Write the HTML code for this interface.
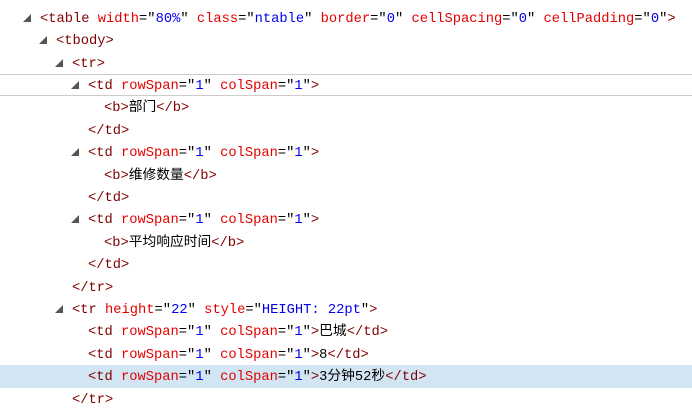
<!DOCTYPE html>
<html><head><meta charset="utf-8"><style>
body{margin:0;width:692px;height:411px;overflow:hidden;background:#fff;font-family:"Liberation Mono","Noto Sans CJK SC",monospace;font-size:13.75px;color:#000}
.r{position:absolute;left:0;width:692px;height:22.4px;line-height:22.4px;white-space:pre}
.r>span:not(.tri){top:2px}
.t{color:#800000}.a{color:#e50000}.v{color:#0000f0}
.tri{position:absolute;top:7px;width:0;height:0;border-left:8px solid transparent;border-bottom:8px solid #555}
.hl{background:#d2e5f3}
.bx{border-top:1px solid #ccc;border-bottom:1px solid #ccc;box-sizing:border-box}
</style></head><body>
<div class="r" style="top:6.8px"><span class="tri" style="left:23px"></span><span style="position:absolute;left:40px"><span class="t">&lt;table</span> <span class="a">width</span>="<span class="v">80%</span>" <span class="a">class</span>="<span class="v">ntable</span>" <span class="a">border</span>="<span class="v">0</span>" <span class="a">cellSpacing</span>="<span class="v">0</span>" <span class="a">cellPadding</span>="<span class="v">0</span>"<span class="t">&gt;</span></span></div>
<div class="r" style="top:29.2px"><span class="tri" style="left:39px"></span><span style="position:absolute;left:56px"><span class="t">&lt;tbody&gt;</span></span></div>
<div class="r" style="top:51.6px"><span class="tri" style="left:55px"></span><span style="position:absolute;left:72px"><span class="t">&lt;tr&gt;</span></span></div>
<div class="r bx" style="top:74px"><span class="tri" style="left:71px;top:6px"></span><span style="position:absolute;left:88px;top:1px"><span class="t">&lt;td</span> <span class="a">rowSpan</span>="<span class="v">1</span>" <span class="a">colSpan</span>="<span class="v">1</span>"<span class="t">&gt;</span></span></div>
<div class="r" style="top:96.4px"><span style="position:absolute;left:104px"><span class="t">&lt;b&gt;</span>部门<span class="t">&lt;/b&gt;</span></span></div>
<div class="r" style="top:118.8px"><span style="position:absolute;left:88px"><span class="t">&lt;/td&gt;</span></span></div>
<div class="r" style="top:141.2px"><span class="tri" style="left:71px"></span><span style="position:absolute;left:88px"><span class="t">&lt;td</span> <span class="a">rowSpan</span>="<span class="v">1</span>" <span class="a">colSpan</span>="<span class="v">1</span>"<span class="t">&gt;</span></span></div>
<div class="r" style="top:163.6px"><span style="position:absolute;left:104px"><span class="t">&lt;b&gt;</span>维修数量<span class="t">&lt;/b&gt;</span></span></div>
<div class="r" style="top:186px"><span style="position:absolute;left:88px"><span class="t">&lt;/td&gt;</span></span></div>
<div class="r" style="top:208.4px"><span class="tri" style="left:71px"></span><span style="position:absolute;left:88px"><span class="t">&lt;td</span> <span class="a">rowSpan</span>="<span class="v">1</span>" <span class="a">colSpan</span>="<span class="v">1</span>"<span class="t">&gt;</span></span></div>
<div class="r" style="top:230.8px"><span style="position:absolute;left:104px"><span class="t">&lt;b&gt;</span>平均响应时间<span class="t">&lt;/b&gt;</span></span></div>
<div class="r" style="top:253.2px"><span style="position:absolute;left:88px"><span class="t">&lt;/td&gt;</span></span></div>
<div class="r" style="top:275.6px"><span style="position:absolute;left:72px"><span class="t">&lt;/tr&gt;</span></span></div>
<div class="r" style="top:298px"><span class="tri" style="left:55px"></span><span style="position:absolute;left:72px"><span class="t">&lt;tr</span> <span class="a">height</span>="<span class="v">22</span>" <span class="a">style</span>="<span class="v">HEIGHT: 22pt</span>"<span class="t">&gt;</span></span></div>
<div class="r" style="top:320.4px"><span style="position:absolute;left:88px"><span class="t">&lt;td</span> <span class="a">rowSpan</span>="<span class="v">1</span>" <span class="a">colSpan</span>="<span class="v">1</span>"<span class="t">&gt;</span>巴城<span class="t">&lt;/td&gt;</span></span></div>
<div class="r" style="top:342.8px"><span style="position:absolute;left:88px"><span class="t">&lt;td</span> <span class="a">rowSpan</span>="<span class="v">1</span>" <span class="a">colSpan</span>="<span class="v">1</span>"<span class="t">&gt;</span>8<span class="t">&lt;/td&gt;</span></span></div>
<div class="r hl" style="top:365.2px"><span style="position:absolute;left:88px"><span class="t">&lt;td</span> <span class="a">rowSpan</span>="<span class="v">1</span>" <span class="a">colSpan</span>="<span class="v">1</span>"<span class="t">&gt;</span>3分钟52秒<span class="t">&lt;/td&gt;</span></span></div>
<div class="r" style="top:387.6px"><span style="position:absolute;left:72px"><span class="t">&lt;/tr&gt;</span></span></div>
</body></html>
